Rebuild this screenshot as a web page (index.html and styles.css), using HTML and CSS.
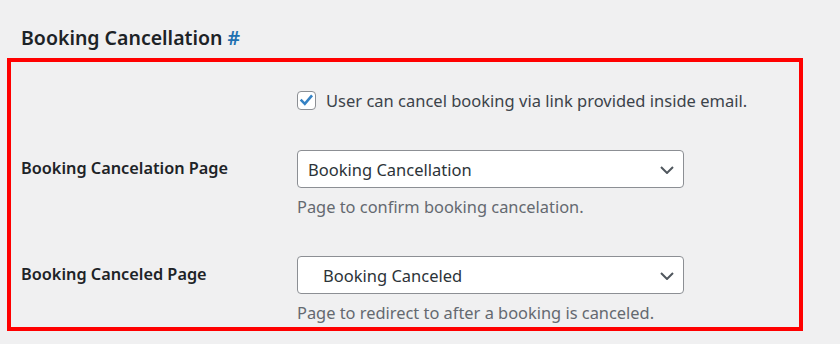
FILE: index.html
```html
<!DOCTYPE html>
<html lang="en">
<head>
<meta charset="utf-8">
<title>Booking Cancellation</title>
<link rel="stylesheet" href="styles.css">
</head>
<body>
<div class="wrap">
  <h2 class="section-title">Booking Cancellation <a class="anchor" href="#booking-cancellation">#</a></h2>
  <div class="panel">
    <div class="row row-check">
      <div class="label"></div>
      <div class="field">
        <label class="check">
          <span class="check-box">
            <svg width="19" height="19" viewBox="0 0 19 19" aria-hidden="true"><polyline points="4.6,9.6 7.8,12.8 14.2,5.4" fill="none" stroke="#3582c4" stroke-width="2.6" stroke-linecap="square"/></svg>
          </span>
          <span class="check-text">User can cancel booking via link provided inside email.</span>
        </label>
      </div>
    </div>
    <div class="row row-select first">
      <div class="label">Booking Cancelation Page</div>
      <div class="field">
        <div class="select">
          <span class="select-text">Booking Cancellation</span>
          <svg class="chevron" width="14" height="8" viewBox="0 0 14 8" aria-hidden="true"><polyline points="1,1 7,7 13,1" fill="none" stroke="#50575e" stroke-width="2"/></svg>
        </div>
        <p class="desc">Page to confirm booking cancelation.</p>
      </div>
    </div>
    <div class="row row-select second">
      <div class="label">Booking Canceled Page</div>
      <div class="field">
        <div class="select">
          <span class="select-text indent">Booking Canceled</span>
          <svg class="chevron" width="14" height="8" viewBox="0 0 14 8" aria-hidden="true"><polyline points="1,1 7,7 13,1" fill="none" stroke="#50575e" stroke-width="2"/></svg>
        </div>
        <p class="desc">Page to redirect to after a booking is canceled.</p>
      </div>
    </div>
  </div>
</div>
</body>
</html>
```

FILE: styles.css
```css
* { box-sizing: border-box; }

html, body {
  margin: 0;
  padding: 0;
  background: #f0f0f1;
}

body {
  font-family: "Noto Sans", "Open Sans", sans-serif;
  color: #1d2327;
  width: 840px;
  height: 344px;
  overflow: hidden;
}

.wrap {
  padding: 0;
}

.section-title {
  margin: 24px 0 0 21px;
  font-size: 19.5px;
  font-weight: 600;
  line-height: 28px;
  color: #1d2327;
}

.anchor {
  color: #2271b1;
  text-decoration: none;
  font-weight: 600;
}

.panel {
  margin: 6px 0 0 7px;
  width: 796px;
  height: 273px;
  border: 4px solid #ff0000;
  padding: 0 0 0 10px;
}

.row {
  display: flex;
  align-items: flex-start;
}

.label {
  width: 276px;
  flex: none;
  font-size: 16.3px;
  font-weight: 600;
  color: #1d2327;
  height: 38px;
  line-height: 37px;
}

.row-check {
  margin-top: 29px;
}

.row-check .label {
  height: 19px;
}

.row-select.first {
  margin-top: 40px;
}

.row-select.second {
  margin-top: 39px;
}

.check {
  display: flex;
  align-items: flex-start;
  gap: 10px;
  height: 19px;
}

.check-box {
  width: 19px;
  height: 19px;
  border: 1px solid #8c8f94;
  border-radius: 4px;
  background: #fff;
  display: flex;
  align-items: center;
  justify-content: center;
  flex: none;
}

.check-box svg {
  display: block;
  margin: -1px;
}

.check-text {
  font-size: 16.5px;
  line-height: 19px;
  color: #3c434a;
}

.select {
  width: 387px;
  height: 38px;
  border: 1px solid #8c8f94;
  border-radius: 4px;
  background: #fff;
  display: flex;
  align-items: center;
  justify-content: space-between;
  padding: 1px 9px 0 10px;
}

.select-text {
  font-size: 16.5px;
  line-height: 36px;
  color: #2c3338;
}

.select-text.indent {
  padding-left: 15px;
}

.chevron {
  display: block;
  flex: none;
}

.desc {
  margin: 9px 0 0 0;
  font-size: 16.4px;
  line-height: 20px;
  color: #646970;
}
```
